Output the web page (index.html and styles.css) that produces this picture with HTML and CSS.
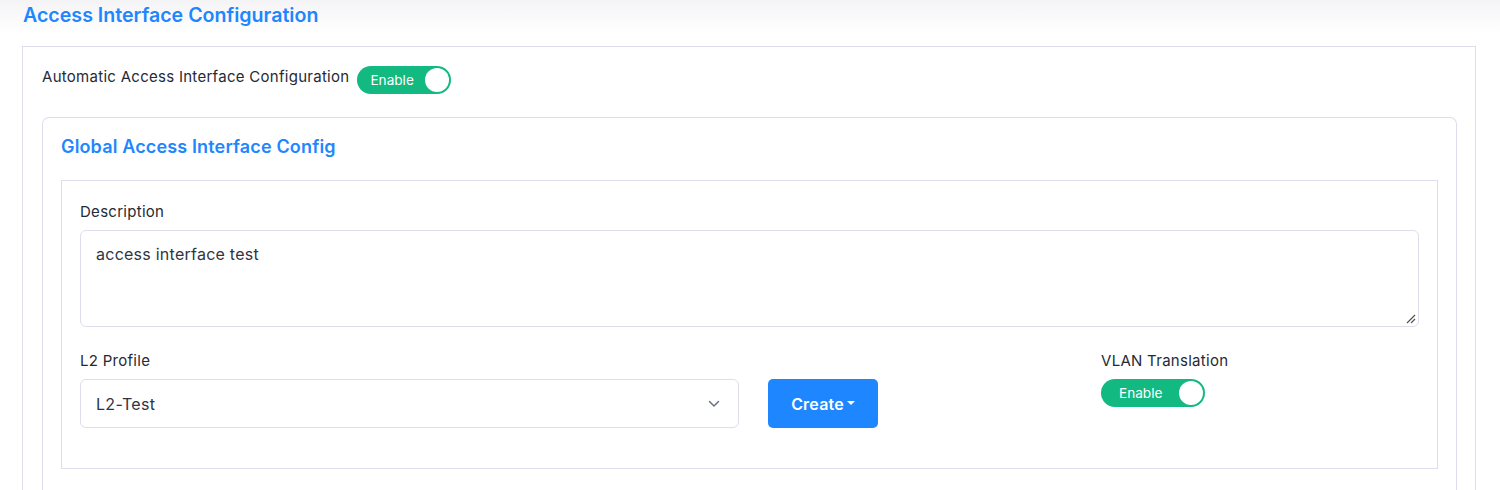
FILE: index.html
```html
<!DOCTYPE html>
<html>
<head>
<meta charset="utf-8">
<link rel="stylesheet" href="styles.css">
</head>
<body>
<div class="page">
  <h1 class="page-title">Access Interface Configuration</h1>
  <div class="outer">
    <div class="auto-row">
      <span class="auto-label">Automatic Access Interface Configuration</span>
      <span class="toggle toggle-sm"><span class="toggle-text">Enable</span><span class="knob"></span></span>
    </div>
    <div class="card">
      <h2 class="card-title">Global Access Interface Config</h2>
      <div class="inner">
        <label class="field-label">Description</label>
        <div class="textarea">access interface test
          <svg class="grip" width="10" height="10" viewBox="0 0 10 10"><path d="M1 9 L9 1 M5 9 L9 5" stroke="#555" stroke-width="1.2" fill="none"/></svg>
        </div>
        <div class="row">
          <div class="col-select">
            <label class="field-label">L2 Profile</label>
            <div class="select">
              <span>L2-Test</span>
              <svg class="chev" width="12" height="8" viewBox="0 0 12 8"><path d="M1.5 1.5 L6 6 L10.5 1.5" stroke="#6b7186" stroke-width="1.5" fill="none" stroke-linecap="round" stroke-linejoin="round"/></svg>
            </div>
          </div>
          <button class="btn-create">Create<span class="caret"></span></button>
          <div class="col-vlan">
            <label class="field-label">VLAN Translation</label>
            <span class="toggle toggle-lg"><span class="toggle-text">Enable</span><span class="knob"></span></span>
          </div>
        </div>
      </div>
    </div>
  </div>
</div>
</body>
</html>
```
FILE: styles.css
```css
* { box-sizing: border-box; }
html, body { margin: 0; padding: 0; }
body {
  font-family: Inter, "Noto Sans", sans-serif;
  color: #222530;
  background: linear-gradient(to bottom, #f4f4f6 0px, #ffffff 34px);
  width: 1500px;
  height: 490px;
  overflow: hidden;
}
.page { padding: 4px 24px 0 22px; }
.page-title {
  margin: 0 0 0 1px;
  font-size: 19.6px;
  font-weight: 600;
  color: #1e86ff;
  line-height: 22px;
}
.outer {
  margin-top: 20px;
  border: 1px solid #dcdfeb;
  border-bottom: none;
  padding: 19px 18px 0 19px;
  background: #fff;
  height: 444px;
}
.auto-row {
  display: flex;
  align-items: center;
  gap: 8px;
  height: 28px;
}
.auto-label {
  font-size: 15px;
  letter-spacing: 0.28px;
  margin-top: -7px;
  color: #262a36;
}
.toggle {
  display: inline-flex;
  align-items: center;
  justify-content: space-between;
  background: #12b981;
  border-radius: 14px;
  height: 28px;
  padding: 0 2px 0 13px;
  color: #fff;
  font-size: 13.6px;
}
.toggle-sm { width: 94px; }
.toggle-lg { width: 104px; padding-left: 18px; }
.knob {
  width: 24px;
  height: 24px;
  border-radius: 50%;
  background: #fff;
}
.card {
  margin-top: 23px;
  border: 1px solid #dcdfeb;
  border-bottom: none;
  border-radius: 7px 7px 0 0;
  padding: 18px 18px 0 18px;
  height: 373px;
}
.card-title {
  margin: 0;
  font-size: 18px;
  letter-spacing: 0.15px;
  font-weight: 600;
  color: #1e86ff;
  line-height: 22px;
}
.inner {
  margin-top: 22px;
  border: 1px solid #dcdfeb;
  padding: 21px 18px 0 18px;
  height: 289px;
}
.field-label {
  display: block;
  font-size: 15px;
  letter-spacing: 0.28px;
  line-height: 20px;
  color: #262a36;
}
.textarea {
  position: relative;
  margin-top: 8px;
  height: 97px;
  border: 1px solid #dcdfeb;
  border-radius: 6px;
  padding: 13px 15px;
  font-size: 16px;
  letter-spacing: 0.25px;
  line-height: 21px;
  color: #303444;
}
.grip { position: absolute; right: 2px; bottom: 2px; }
.row {
  display: flex;
  align-items: flex-start;
  margin-top: 24px;
}
.col-select { width: 659px; }
.select {
  margin-top: 8px;
  height: 49px;
  border: 1px solid #dcdfeb;
  border-radius: 6px;
  display: flex;
  align-items: center;
  justify-content: space-between;
  padding: 0 18px 0 15px;
  font-size: 16px;
  letter-spacing: 0.3px;
  color: #303444;
}
.btn-create {
  margin-left: 29px;
  margin-top: 28px;
  width: 110px;
  height: 49px;
  border: none;
  border-radius: 5px;
  background: #1e86ff;
  color: #fff;
  font-family: Inter, "Noto Sans", sans-serif;
  font-size: 16px;
  letter-spacing: 0.2px;
  font-weight: 600;
  display: flex;
  align-items: center;
  justify-content: center;
  gap: 3px;
  padding: 0;
}
.caret {
  width: 0; height: 0;
  border-left: 4px solid transparent;
  border-right: 4px solid transparent;
  border-top: 4px solid #fff;
  margin-top: -1px;
}
.col-vlan {
  margin-left: 223px;
  display: flex;
  flex-direction: column;
  gap: 8px;
}
```
